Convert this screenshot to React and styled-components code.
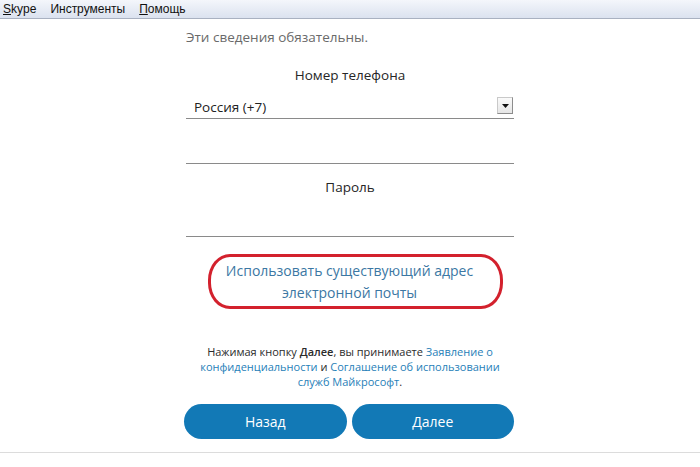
import React from 'react';
import styled, { createGlobalStyle } from 'styled-components';

const GlobalStyle = createGlobalStyle`
  body {
    margin: 0;
    background: #ffffff;
    font-family: "Open Sans", "Noto Sans", sans-serif;
  }
`;

const MenuBar = styled.div`
  display: flex;
  align-items: center;
  height: 18px;
  padding-left: 3px;
  background: linear-gradient(#f4f6fb, #dbe2ef);
  border-bottom: 1px solid #a9b1c1;
  font-family: "Liberation Sans", Arial, sans-serif;
  font-size: 12px;
  color: #111;
`;

const MenuItem = styled.span`
  margin-right: 14px;
  & u {
    text-decoration: underline;
  }
`;

const Column = styled.div`
  width: 328px;
  margin: 0 auto;
  display: flex;
  flex-direction: column;
`;

const Notice = styled.div`
  margin-top: 8px;
  font-size: 13.5px;
  line-height: 20px;
  color: #6a6a6a;
`;

const Label = styled.div`
  margin-top: ${(p) => p.$top}px;
  text-align: center;
  font-size: 13.5px;
  line-height: 20px;
  color: #262626;
`;

const SelectRow = styled.div`
  margin-top: 10px;
  height: 23px;
  display: flex;
  align-items: center;
  justify-content: space-between;
  padding-left: 8px;
  border-bottom: 1px solid #8a8a8a;
  font-size: 13.5px;
  color: #222;
`;

const ArrowButton = styled.div`
  width: 16px;
  height: 17px;
  margin-right: 1px;
  margin-bottom: 2px;
  box-sizing: border-box;
  border: 1px solid #c9c9c9;
  border-right-color: #8d8d8d;
  border-bottom-color: #8d8d8d;
  background: linear-gradient(#fafafa, #e6e6e6);
  display: flex;
  align-items: center;
  justify-content: center;
`;

const Input = styled.div`
  height: ${(p) => p.$h}px;
  border-bottom: 1px solid #8a8a8a;
`;

const CircledLink = styled.div`
  align-self: flex-start;
  margin-left: 22px;
  margin-top: 17px;
  width: 295px;
  height: 55px;
  box-sizing: border-box;
  border: 3px solid #d3212d;
  border-radius: 22px / 26px;
  padding: 3px 12px 0 0;
  text-align: center;
  font-size: 14px;
  line-height: 22px;
  color: #3b77a3;
`;

const Terms = styled.div`
  align-self: center;
  width: 310px;
  margin-top: 35px;
  display: flex;
  flex-direction: column;
  align-items: center;
  font-size: 11px;
  line-height: 15px;
  color: #2b2b2b;
  & b {
    font-weight: 600;
  }
`;

const TermsLine = styled.div`
  white-space: nowrap;
`;

const TermsLink = styled.span`
  color: #1f80b8;
`;

const Buttons = styled.div`
  margin-top: 15px;
  margin-left: -2px;
  display: flex;
  gap: 5px;
`;

const Button = styled.button`
  width: 163px;
  height: 35px;
  border: none;
  border-radius: 18px;
  background: #1279b6;
  color: #ffffff;
  font-family: "Open Sans", "Noto Sans", sans-serif;
  font-size: 14px;
  cursor: pointer;
`;

const Footer = styled.div`
  margin-top: 13px;
  border-top: 1px solid #dcdcdc;
  height: 14px;
`;

export default function App() {
  return (
    <>
      <GlobalStyle />
      <MenuBar>
        <MenuItem><u>S</u>kype</MenuItem>
        <MenuItem>Инструменты</MenuItem>
        <MenuItem><u>П</u>омощь</MenuItem>
      </MenuBar>
      <Column>
        <Notice>Эти сведения обязательны.</Notice>
        <Label $top={18}>Номер телефона</Label>
        <SelectRow>
          <span>Россия (+7)</span>
          <ArrowButton>
            <svg width="7" height="4" viewBox="0 0 7 4">
              <path d="M0 0H7L3.5 4Z" fill="#111" />
            </svg>
          </ArrowButton>
        </SelectRow>
        <Input $h={44} />
        <Label $top={13}>Пароль</Label>
        <Input $h={39} />
        <CircledLink>
          Использовать существующий адрес
          <br />
          электронной почты
        </CircledLink>
        <Terms>
          <TermsLine>
            Нажимая кнопку <b>Далее</b>, вы принимаете <TermsLink>Заявление о</TermsLink>
          </TermsLine>
          <TermsLine>
            <TermsLink>конфиденциальности</TermsLink> и <TermsLink>Соглашение об использовании</TermsLink>
          </TermsLine>
          <TermsLine>
            <TermsLink>служб Майкрософт</TermsLink>.
          </TermsLine>
        </Terms>
        <Buttons>
          <Button>Назад</Button>
          <Button>Далее</Button>
        </Buttons>
      </Column>
      <Footer />
    </>
  );
}
